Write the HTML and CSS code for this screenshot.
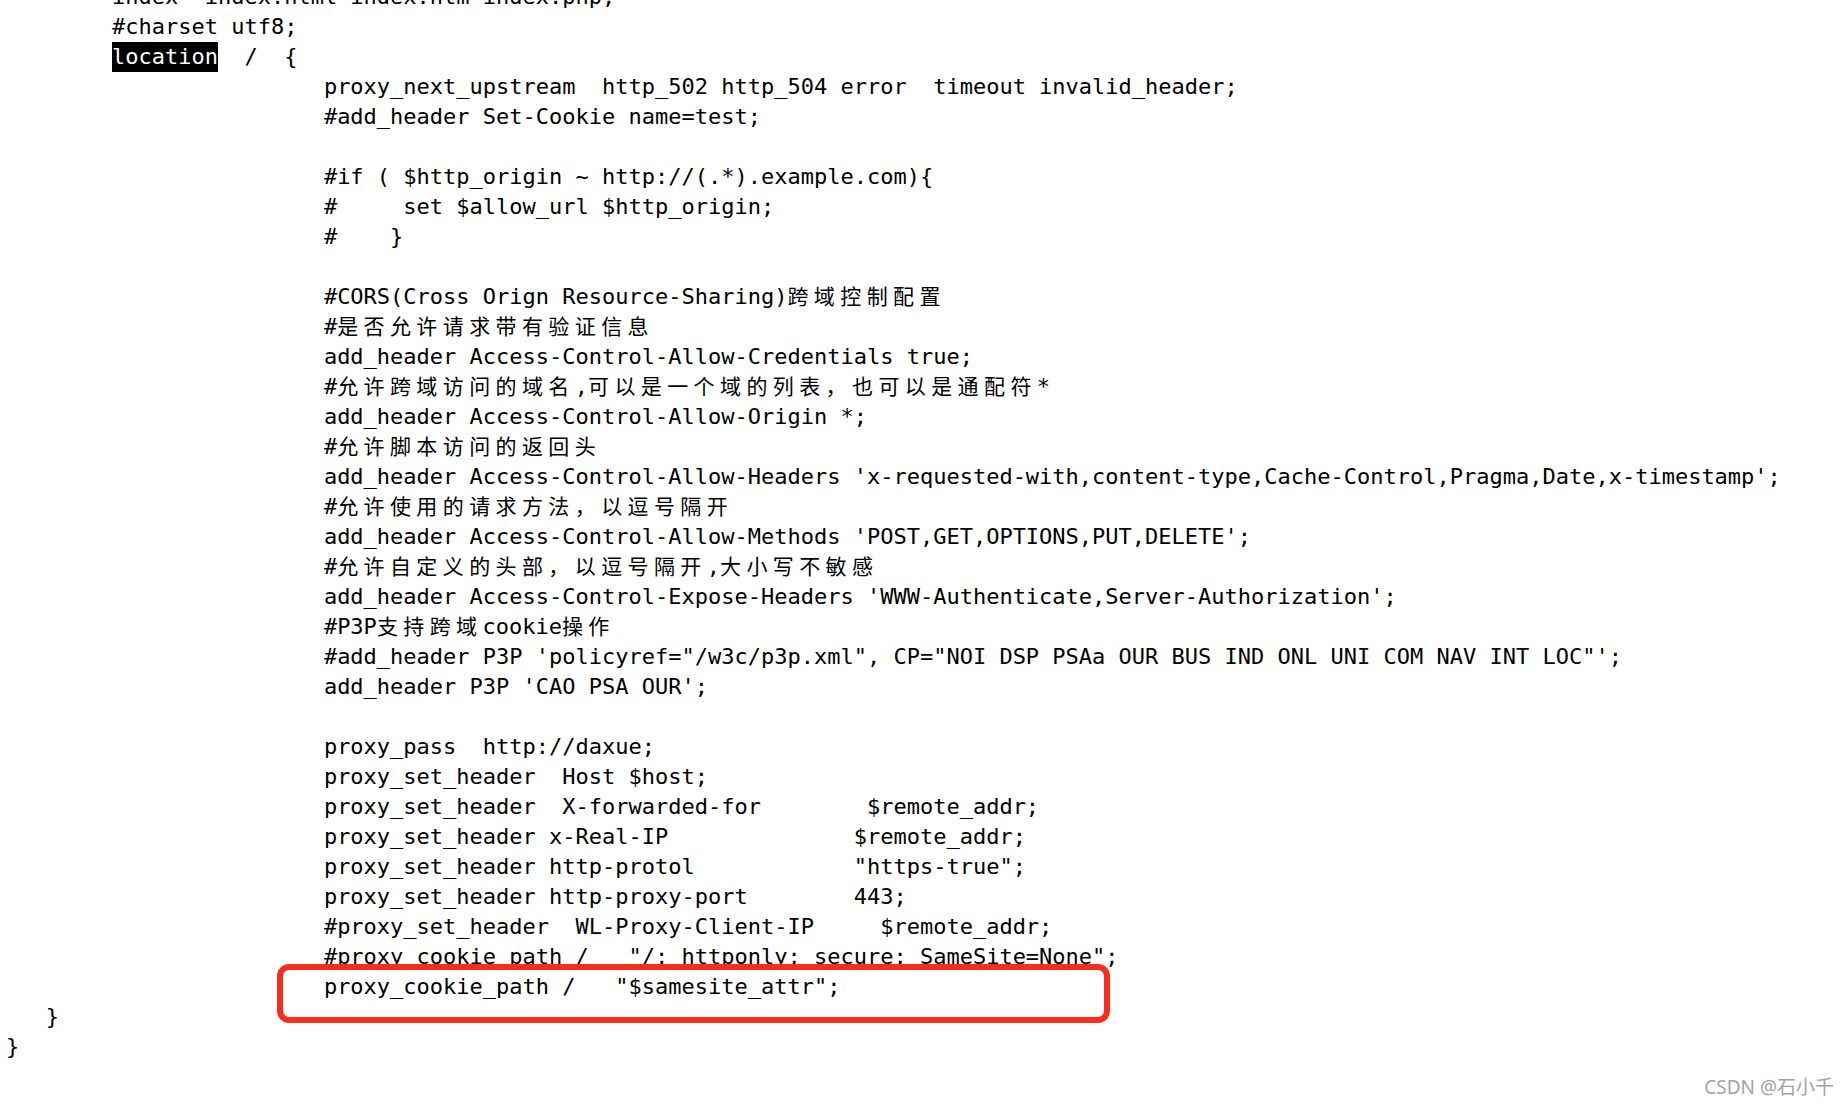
FILE: index.html
```html
<!DOCTYPE html>
<html lang="zh">
<head>
<meta charset="utf-8">
<title>nginx config</title>
<link rel="stylesheet" href="styles.css">
</head>
<body>
<pre class="code">        index  index.html index.htm index.php;
        #charset utf8;
        <span class="hl">location</span>  /  {
                        proxy_next_upstream  http_502 http_504 error  timeout invalid_header;
                        #add_header Set-Cookie name=test;

                        #if ( $http_origin ~ http://(.*).example.com){
                        #     set $allow_url $http_origin;
                        #    }

                        #CORS(Cross Orign Resource-Sharing)<span class="cj">跨域控制配置</span>
                        #<span class="cj">是否允许请求带有验证信息</span>
                        add_header Access-Control-Allow-Credentials true;
                        #<span class="cj">允许跨域访问的域名</span>,<span class="cj">可以是一个域的列表，也可以是通配符</span>*
                        add_header Access-Control-Allow-Origin *;
                        #<span class="cj">允许脚本访问的返回头</span>
                        add_header Access-Control-Allow-Headers 'x-requested-with,content-type,Cache-Control,Pragma,Date,x-timestamp';
                        #<span class="cj">允许使用的请求方法，以逗号隔开</span>
                        add_header Access-Control-Allow-Methods 'POST,GET,OPTIONS,PUT,DELETE';
                        #<span class="cj">允许自定义的头部，以逗号隔开</span>,<span class="cj">大小写不敏感</span>
                        add_header Access-Control-Expose-Headers 'WWW-Authenticate,Server-Authorization';
                        #P3P<span class="cj">支持跨域</span>cookie<span class="cj">操作</span>
                        #add_header P3P 'policyref="/w3c/p3p.xml", CP="NOI DSP PSAa OUR BUS IND ONL UNI COM NAV INT LOC"';
                        add_header P3P 'CAO PSA OUR';

                        proxy_pass  http://daxue;
                        proxy_set_header  Host $host;
                        proxy_set_header  X-forwarded-for        $remote_addr;
                        proxy_set_header x-Real-IP              $remote_addr;
                        proxy_set_header http-protol            "https-true";
                        proxy_set_header http-proxy-port        443;
                        #proxy_set_header  WL-Proxy-Client-IP     $remote_addr;
                        #proxy_cookie_path /   "/; httponly; secure; SameSite=None";
                        proxy_cookie_path /   "$samesite_attr";
   }
}</pre>
<div class="mark"></div>
<div class="watermark">CSDN @石小千</div>
</body>
</html>
```
FILE: styles.css
```css
html, body {
  margin: 0;
  padding: 0;
  background: #ffffff;
}
body {
  position: relative;
  width: 1848px;
  height: 1106px;
  overflow: hidden;
}
.code {
  margin: -18px 0 0 6px;
  font-family: "DejaVu Sans Mono", "Liberation Mono", monospace;
  font-size: 22px;
  line-height: 30px;
  color: #000000;
  white-space: pre;
}
.hl {
  display: inline-block;
  height: 30px;
  vertical-align: top;
  background: #000000;
  color: #ffffff;
}
.cj {
  font-family: "Noto Sans CJK SC", sans-serif;
  font-size: 21px;
  line-height: 1;
  letter-spacing: 5.4px;
}
.mark {
  position: absolute;
  left: 277px;
  top: 964px;
  width: 833px;
  height: 59px;
  box-sizing: border-box;
  border: 6px solid #fb2b1e;
  border-radius: 12px;
}
.watermark {
  position: absolute;
  right: 14px;
  bottom: 6px;
  font-family: "Noto Sans", "Noto Sans CJK SC", sans-serif;
  font-size: 19px;
  color: #a3a3a3;
}
```
